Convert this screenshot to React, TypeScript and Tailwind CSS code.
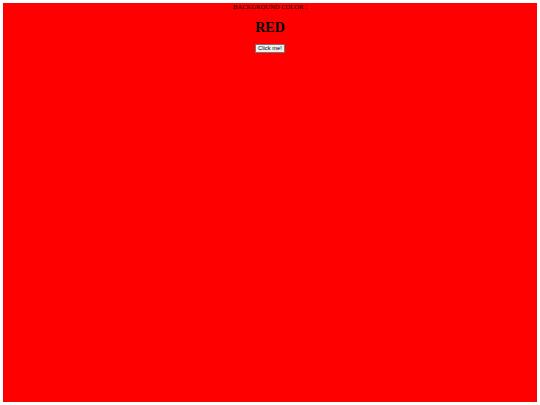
export default function App() {
  return (
    <div className="h-[405px] w-[540px] bg-white p-[3px]">
      <div className="flex h-full flex-col items-center bg-[#ff0000] font-['Liberation_Serif',serif] text-black">
        <p className="text-[6.6px] leading-[8px]">BACKGROUND COLOR :</p>
        <h1 className="mt-[9px] text-[14px] font-bold leading-[16px]">RED</h1>
        <button className="mt-[8px] h-[8.5px] rounded-[1px] border-[0.5px] border-[#767676] bg-[#efefef] px-[2.5px] font-['Liberation_Sans',sans-serif] text-[5.8px] leading-[7px]">
          Click me!
        </button>
      </div>
    </div>
  );
}
